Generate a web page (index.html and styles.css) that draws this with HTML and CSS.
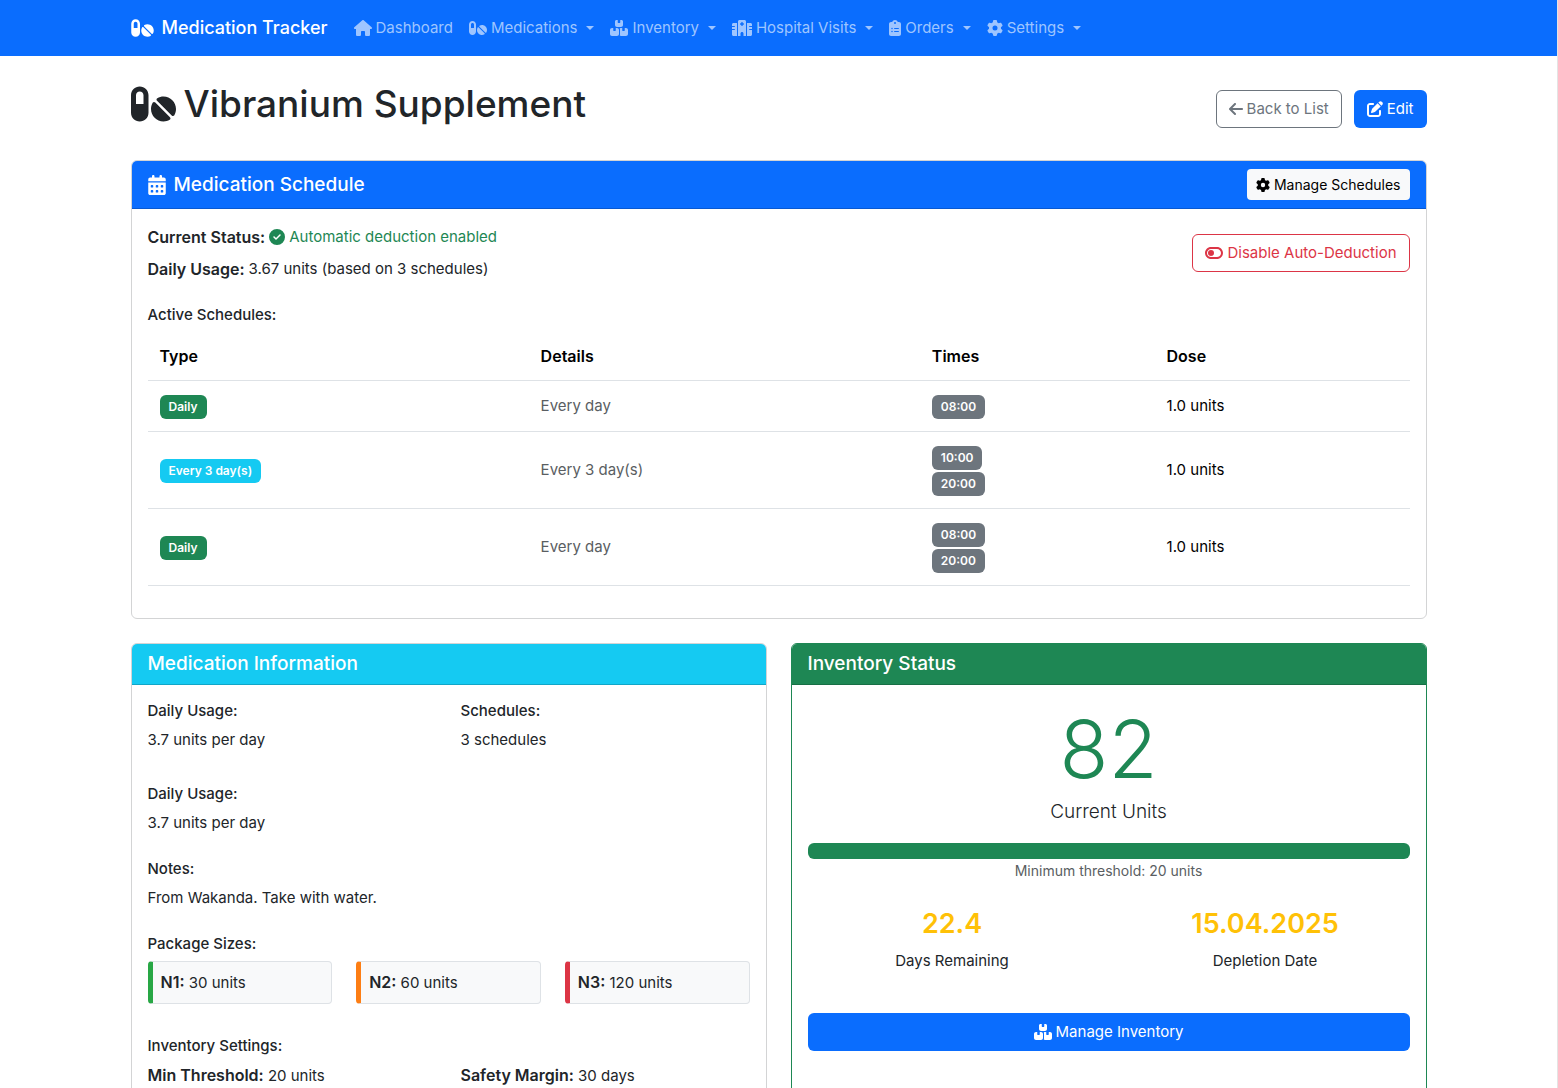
FILE: index.html
```html
<!DOCTYPE html>
<html lang="en">
<head>
<meta charset="utf-8">
<meta name="viewport" content="width=device-width, initial-scale=1">
<title>Vibranium Supplement - Medication Tracker</title>
<link rel="stylesheet" href="styles.css">
</head>
<body>
<svg class="sprite" aria-hidden="true">
  <symbol id="pills" viewBox="0 0 576 512"><path d="M112 96c-26.5 0-48 21.5-48 48V256h96V144c0-26.5-21.5-48-48-48zM0 144C0 82.1 50.1 32 112 32s112 50.1 112 112V368c0 61.900-50.1 112-112 112S0 429.900 0 368V144zM554.900 399.400c-7.100 12.300-23.700 13.100-33.800 3.100L333.500 214.900c-10-10-9.300-26.700 3.100-33.800C360 167.700 387.100 160 416 160c88.400 0 160 71.600 160 160c0 28.900-7.700 56-21.100 79.400zm-59.500 59.500C472 472.300 444.900 480 416 480c-88.400 0-160-71.600-160-160c0-28.900 7.700-56 21.100-79.400c7.100-12.300 23.700-13.100 33.800-3.100L498.500 425.100c10 10 9.300 26.700-3.100 33.800z"/></symbol>
  <symbol id="house" viewBox="0 0 576 512"><path d="M575.8 255.5c0 18-15 32.1-32 32.1h-32l.7 160.2c0 2.700-.2 5.400-.5 8.100V472c0 22.100-17.900 40-40 40H456c-1.100 0-2.200 0-3.300-.1c-1.400 .1-2.800 .1-4.200 .1H416 392c-22.100 0-40-17.900-40-40V448 384c0-17.700-14.300-32-32-32H256c-17.700 0-32 14.300-32 32v64 24c0 22.100-17.900 40-40 40H160 128.100c-1.500 0-3-.1-4.500-.2c-1.200 .1-2.400 .2-3.600 .2H104c-22.100 0-40-17.900-40-40V360c0-.9 0-1.900 .1-2.800V287.600H32c-18 0-32-14-32-32.100c0-9 3-17 10-24L266.400 8c7-7 15-8 22-8s15 2 21 7L564.800 231.500c8 7 12 15 11 24z"/></symbol>
  <symbol id="boxes" viewBox="0 0 576 512"><path d="M248 0H208c-26.5 0-48 21.5-48 48V160c0 35.3 28.7 64 64 64H352c35.3 0 64-28.7 64-64V48c0-26.5-21.5-48-48-48H328V80c0 8.800-7.200 16-16 16H264c-8.800 0-16-7.200-16-16V0zM64 256c-35.3 0-64 28.700-64 64V448c0 35.300 28.700 64 64 64H224c35.300 0 64-28.700 64-64V320c0-35.300-28.700-64-64-64H184v80c0 8.800-7.200 16-16 16H120c-8.800 0-16-7.200-16-16V256H64zM352 512H512c35.300 0 64-28.700 64-64V320c0-35.300-28.700-64-64-64H472v80c0 8.800-7.200 16-16 16H408c-8.800 0-16-7.200-16-16V256H352c-15 0-28.800 5.100-39.700 13.800c4.900 10.400 7.700 22 7.700 34.200V464c0 12.200-2.800 23.800-7.700 34.200C323.200 506.900 337 512 352 512z"/></symbol>
  <symbol id="hospital" viewBox="0 0 640 512"><path d="M192 48c0-26.5 21.5-48 48-48H400c26.5 0 48 21.5 48 48V512H368V432c0-26.500-21.500-48-48-48s-48 21.500-48 48v80H192V48zM48 96H160V512H48c-26.500 0-48-21.500-48-48V320H80c8.800 0 16-7.200 16-16s-7.200-16-16-16H0V224H80c8.800 0 16-7.200 16-16s-7.200-16-16-16H0V144c0-26.500 21.500-48 48-48zm544 0c26.500 0 48 21.500 48 48v48H560c-8.800 0-16 7.200-16 16s7.200 16 16 16h80v64H560c-8.800 0-16 7.200-16 16s7.200 16 16 16h80V464c0 26.500-21.500 48-48 48H480V96H592zM312 64c-8.800 0-16 7.200-16 16v24H272c-8.800 0-16 7.200-16 16v16c0 8.800 7.200 16 16 16h24v24c0 8.800 7.200 16 16 16h16c8.800 0 16-7.200 16-16V152h24c8.800 0 16-7.200 16-16V120c0-8.800-7.200-16-16-16H344V80c0-8.800-7.200-16-16-16H312z"/></symbol>
  <symbol id="clipboard" viewBox="0 0 384 512"><path d="M192 0c-41.8 0-77.4 26.7-90.5 64H64C28.7 64 0 92.7 0 128V448c0 35.3 28.7 64 64 64H320c35.3 0 64-28.7 64-64V128c0-35.3-28.7-64-64-64H282.5C269.4 26.7 233.8 0 192 0zm0 64a32 32 0 1 1 0 64 32 32 0 1 1 0-64zM72 272a24 24 0 1 1 48 0 24 24 0 1 1 -48 0zm104-16H304c8.800 0 16 7.200 16 16s-7.200 16-16 16H176c-8.800 0-16-7.200-16-16s7.200-16 16-16zM72 368a24 24 0 1 1 48 0 24 24 0 1 1 -48 0zm88 0c0-8.800 7.200-16 16-16H304c8.800 0 16 7.200 16 16s-7.200 16-16 16H176c-8.800 0-16-7.200-16-16z"/></symbol>
  <symbol id="gear" viewBox="0 0 512 512"><path d="M495.9 166.6c3.2 8.7 .5 18.4-6.4 24.6l-43.3 39.4c1.1 8.3 1.7 16.8 1.7 25.4s-.6 17.1-1.7 25.4l43.3 39.4c6.9 6.2 9.6 15.9 6.4 24.6c-4.4 11.9-9.7 23.3-15.8 34.3l-4.7 8.1c-6.6 11-14 21.4-22.1 31.2c-5.9 7.2-15.7 9.6-24.5 6.8l-55.7-17.7c-13.4 10.3-28.2 18.9-44 25.4l-12.5 57.1c-2 9.1-9 16.3-18.2 17.8c-13.8 2.3-28 3.5-42.5 3.5s-28.7-1.2-42.5-3.5c-9.2-1.5-16.2-8.7-18.2-17.8l-12.5-57.1c-15.8-6.5-30.6-15.1-44-25.4L83.1 425.9c-8.8 2.8-18.6 .3-24.5-6.8c-8.1-9.8-15.5-20.2-22.1-31.2l-4.7-8.1c-6.1-11-11.4-22.4-15.8-34.3c-3.2-8.7-.5-18.4 6.4-24.6l43.3-39.4C64.6 273.1 64 264.6 64 256s.6-17.1 1.7-25.4L22.4 191.2c-6.9-6.2-9.6-15.9-6.4-24.6c4.4-11.9 9.7-23.3 15.8-34.3l4.7-8.1c6.6-11 14-21.4 22.1-31.2c5.9-7.2 15.7-9.6 24.5-6.8l55.7 17.7c13.4-10.3 28.2-18.9 44-25.4l12.5-57.1c2-9.1 9-16.3 18.2-17.8C227.3 1.2 241.5 0 256 0s28.7 1.2 42.5 3.5c9.2 1.5 16.2 8.7 18.2 17.8l12.5 57.1c15.8 6.5 30.6 15.1 44 25.4l55.7-17.7c8.8-2.8 18.6-.3 24.5 6.8c8.1 9.8 15.5 20.2 22.1 31.2l4.7 8.1c6.1 11 11.4 22.4 15.8 34.3zM256 336a80 80 0 1 0 0-160 80 80 0 1 0 0 160z"/></symbol>
  <symbol id="arrow-left" viewBox="0 0 448 512"><path d="M9.4 233.4c-12.5 12.5-12.5 32.8 0 45.3l160 160c12.5 12.5 32.8 12.5 45.3 0s12.5-32.8 0-45.3L109.200 288 416 288c17.700 0 32-14.300 32-32s-14.300-32-32-32l-306.700 0L214.600 118.600c12.500-12.500 12.500-32.800 0-45.300s-32.800-12.500-45.300 0l-160 160z"/></symbol>
  <symbol id="pen-square" viewBox="0 0 512 512"><path d="M471.6 21.7c-21.9-21.9-57.3-21.9-79.2 0L362.3 51.7l97.9 97.9 30.1-30.1c21.9-21.9 21.9-57.3 0-79.2L471.6 21.7zm-299.2 220c-6.1 6.1-10.8 13.6-13.5 21.9l-29.6 88.8c-2.9 8.6-.6 18.1 5.8 24.6s15.9 8.7 24.6 5.8l88.8-29.6c8.2-2.7 15.7-7.4 21.9-13.5L437.7 172.3 339.7 74.3 172.4 241.7zM96 64C43 64 0 107 0 160V416c0 53 43 96 96 96H352c53 0 96-43 96-96V320c0-17.7-14.3-32-32-32s-32 14.3-32 32v96c0 17.7-14.3 32-32 32H96c-17.7 0-32-14.3-32-32V160c0-17.7 14.3-32 32-32h96c17.7 0 32-14.3 32-32s-14.3-32-32-32H96z"/></symbol>
  <symbol id="calendar" viewBox="0 0 448 512"><path d="M128 0c17.7 0 32 14.3 32 32V64H288V32c0-17.7 14.3-32 32-32s32 14.3 32 32V64h48c26.5 0 48 21.5 48 48v48H0V112C0 85.5 21.5 64 48 64H96V32c0-17.7 14.3-32 32-32zM0 192H448V464c0 26.5-21.5 48-48 48H48c-26.5 0-48-21.5-48-48V192zm64 80v32c0 8.800 7.200 16 16 16h32c8.800 0 16-7.200 16-16V272c0-8.800-7.200-16-16-16H80c-8.800 0-16 7.200-16 16zm128 0v32c0 8.800 7.200 16 16 16h32c8.800 0 16-7.200 16-16V272c0-8.800-7.200-16-16-16H208c-8.800 0-16 7.200-16 16zm144-16c-8.800 0-16 7.200-16 16v32c0 8.800 7.200 16 16 16h32c8.800 0 16-7.200 16-16V272c0-8.800-7.200-16-16-16H336zM64 400v32c0 8.800 7.200 16 16 16h32c8.800 0 16-7.200 16-16V400c0-8.800-7.200-16-16-16H80c-8.800 0-16 7.200-16 16zm144-16c-8.800 0-16 7.200-16 16v32c0 8.800 7.200 16 16 16h32c8.800 0 16-7.200 16-16V400c0-8.800-7.200-16-16-16H208zm112 16v32c0 8.800 7.200 16 16 16h32c8.800 0 16-7.200 16-16V400c0-8.800-7.200-16-16-16H336c-8.800 0-16 7.200-16 16z"/></symbol>
  <symbol id="circle-check" viewBox="0 0 512 512"><path d="M256 512A256 256 0 1 0 256 0a256 256 0 1 0 0 512zM369 209L241 337c-9.400 9.400-24.600 9.400-33.900 0l-64-64c-9.400-9.400-9.400-24.600 0-33.900s24.600-9.400 33.900 0l47 47L335 175c9.400-9.400 24.600-9.400 33.900 0s9.400 24.600 0 33.900z"/></symbol>
  <symbol id="toggle-off" viewBox="0 0 576 512"><path d="M384 128c70.700 0 128 57.300 128 128s-57.300 128-128 128H192c-70.700 0-128-57.300-128-128s57.300-128 128-128H384zM576 256c0-106-86-192-192-192H192C86 64 0 150 0 256S86 448 192 448H384c106 0 192-86 192-192zM192 352a96 96 0 1 0 0-192 96 96 0 1 0 0 192z"/></symbol>
</svg>

<nav class="navbar">
  <div class="container navbar-inner">
    <a class="brand" href="#"><svg class="icon icon-wide"><use href="#pills"/></svg>Medication Tracker</a>
    <ul class="nav-list">
      <li><a class="nav-link" href="#"><svg class="icon icon-wide"><use href="#house"/></svg>Dashboard</a></li>
      <li><a class="nav-link has-menu" href="#"><svg class="icon icon-wide"><use href="#pills"/></svg>Medications</a></li>
      <li><a class="nav-link has-menu" href="#"><svg class="icon icon-wide"><use href="#boxes"/></svg>Inventory</a></li>
      <li><a class="nav-link has-menu" href="#"><svg class="icon icon-wider"><use href="#hospital"/></svg>Hospital Visits</a></li>
      <li><a class="nav-link has-menu" href="#"><svg class="icon icon-slim"><use href="#clipboard"/></svg>Orders</a></li>
      <li><a class="nav-link has-menu" href="#"><svg class="icon"><use href="#gear"/></svg>Settings</a></li>
    </ul>
  </div>
</nav>

<main class="container">
  <header class="page-header">
    <h1 class="page-title"><svg class="icon icon-wide"><use href="#pills"/></svg>Vibranium Supplement</h1>
    <div class="actions">
      <a class="btn btn-outline-secondary" href="#"><svg class="icon icon-narrow"><use href="#arrow-left"/></svg>Back to List</a>
      <a class="btn btn-primary" href="#"><svg class="icon"><use href="#pen-square"/></svg>Edit</a>
    </div>
  </header>

  <section class="card">
    <div class="card-header header-primary">
      <h2 class="card-title"><svg class="icon icon-narrow"><use href="#calendar"/></svg>Medication Schedule</h2>
      <a class="btn btn-light btn-sm" href="#"><svg class="icon"><use href="#gear"/></svg>Manage Schedules</a>
    </div>
    <div class="card-body">
      <div class="status-row">
        <div class="status-lines">
          <p><strong>Current Status:</strong> <span class="enabled"><svg class="icon"><use href="#circle-check"/></svg>Automatic deduction enabled</span></p>
          <p><strong>Daily Usage:</strong> 3.67 units (based on 3 schedules)</p>
        </div>
        <button class="btn btn-outline-danger" type="button"><svg class="icon icon-wide"><use href="#toggle-off"/></svg>Disable Auto-Deduction</button>
      </div>
      <h3 class="label" id="schedules-label">Active Schedules:</h3>
      <table class="table" aria-labelledby="schedules-label">
        <thead>
          <tr><th class="col-type">Type</th><th class="col-details">Details</th><th class="col-times">Times</th><th>Dose</th></tr>
        </thead>
        <tbody>
          <tr>
            <td><div class="badges"><span class="badge badge-success">Daily</span></div></td>
            <td class="muted">Every day</td>
            <td><div class="badges"><span class="badge">08:00</span></div></td>
            <td>1.0 units</td>
          </tr>
          <tr>
            <td><div class="badges"><span class="badge badge-info">Every 3 day(s)</span></div></td>
            <td class="muted">Every 3 day(s)</td>
            <td><div class="badges"><span class="badge">10:00</span><span class="badge">20:00</span></div></td>
            <td>1.0 units</td>
          </tr>
          <tr>
            <td><div class="badges"><span class="badge badge-success">Daily</span></div></td>
            <td class="muted">Every day</td>
            <td><div class="badges"><span class="badge">08:00</span><span class="badge">20:00</span></div></td>
            <td>1.0 units</td>
          </tr>
        </tbody>
      </table>
    </div>
  </section>

  <div class="split cards">
    <section class="card">
      <div class="card-header header-info"><h2 class="card-title">Medication Information</h2></div>
      <div class="card-body info">
        <div class="split usage">
          <div><h3 class="label">Daily Usage:</h3><p>3.7 units per day</p></div>
          <div><h3 class="label">Schedules:</h3><p>3 schedules</p></div>
        </div>
        <div><h3 class="label">Daily Usage:</h3><p>3.7 units per day</p></div>
        <div><h3 class="label">Notes:</h3><p>From Wakanda. Take with water.</p></div>
        <div class="packages">
          <h3 class="label">Package Sizes:</h3>
          <div class="package-grid">
            <div class="package package-n1"><strong>N1:</strong> 30 units</div>
            <div class="package package-n2"><strong>N2:</strong> 60 units</div>
            <div class="package package-n3"><strong>N3:</strong> 120 units</div>
          </div>
        </div>
        <div>
          <h3 class="label">Inventory Settings:</h3>
          <div class="split">
            <p><strong>Min Threshold:</strong> 20 units</p>
            <p><strong>Safety Margin:</strong> 30 days</p>
          </div>
        </div>
      </div>
    </section>

    <section class="card card-success">
      <div class="card-header header-success"><h2 class="card-title">Inventory Status</h2></div>
      <div class="card-body stock">
        <p class="count">82</p>
        <p class="count-label">Current Units</p>
        <div class="progress" role="progressbar" aria-label="Stock level" aria-valuenow="100"><div class="progress-bar" style="width: 100%"></div></div>
        <p class="threshold muted">Minimum threshold: 20 units</p>
        <div class="split forecast">
          <div><p class="figure">22.4</p><p>Days Remaining</p></div>
          <div><p class="figure">15.04.2025</p><p>Depletion Date</p></div>
        </div>
        <a class="btn btn-primary btn-block" href="#"><svg class="icon icon-wide"><use href="#boxes"/></svg>Manage Inventory</a>
      </div>
    </section>
  </div>
</main>
</body>
</html>
```
FILE: styles.css
```css
*, *::before, *::after { box-sizing: border-box; }

:root {
  --primary: #0a6dfe;
  --success: #1e8754;
  --info: #15caf2;
  --danger: #dc3546;
  --secondary: #6d757d;
  --text: #212529;
  --line: #dee2e6;
}

body {
  margin: 0;
  border-right: 1px solid #e4e4e4;
  background: #fff;
  color: var(--text);
  font-family: Inter, "Liberation Sans", sans-serif;
  font-size: 15px;
  line-height: 24px;
}

h1, h2, h3, p, ul { margin: 0; padding: 0; }
a { color: inherit; text-decoration: none; }
strong { font-size: 16px; font-weight: 600; }

.sprite { display: none; }
.icon { width: 16px; height: 16px; margin-right: 4px; flex: none; fill: currentColor; }
.icon-slim { width: 12px; }
.icon-narrow { width: 14px; }
.icon-wide { width: 18px; }
.icon-wider { width: 20px; }

.container { max-width: 1320px; margin: 0 auto; padding: 0 12px; }

/* Navigation */
.navbar { background: var(--primary); color: #fff; }
.navbar-inner { display: flex; align-items: center; min-height: 56px; gap: 18px; }
.brand { display: flex; align-items: center; font-size: 18px; font-weight: 500; }
.brand .icon { width: 23px; height: 20px; margin-right: 8px; }
.nav-list { display: flex; list-style: none; }
.nav-link { display: flex; align-items: center; padding: 8px; color: #9ec5ff; }
.has-menu::after {
  content: "";
  margin-left: 9px;
  border: 4px solid transparent;
  border-top-color: currentColor;
  border-bottom: 0;
}

/* Page heading */
.page-header { display: flex; justify-content: space-between; align-items: flex-end; padding: 24px 0 32px; }
.page-title { display: flex; align-items: center; font-size: 37px; line-height: 48px; font-weight: 500; }
.page-title .icon { width: 45px; height: 40px; margin-right: 8px; }
.actions { display: flex; gap: 12px; }

/* Buttons */
.btn {
  display: inline-flex;
  align-items: center;
  justify-content: center;
  padding: 6px 12px;
  border: 1px solid transparent;
  border-radius: 6px;
  background: none;
  font: inherit;
}
.btn-primary { background: var(--primary); color: #fff; }
.btn-outline-secondary { border-color: var(--secondary); color: var(--secondary); }
.btn-outline-danger { border-color: var(--danger); color: var(--danger); }
.btn-light { background: #f8f9fa; color: #000; }
.btn-sm { padding: 4px 8px; border-radius: 4px; font-size: 14px; line-height: 21px; }
.btn-sm .icon { width: 14px; height: 14px; }
.btn-block { width: 100%; }

/* Cards */
.card { border: 1px solid #d3d4d5; border-radius: 6px; }
.card-success { border-color: var(--success); }
.card-header {
  display: flex;
  align-items: center;
  justify-content: space-between;
  padding: 8px 16px;
  border-bottom: 1px solid rgba(0, 0, 0, 0.176);
  border-radius: 5px 5px 0 0;
  color: #fff;
}
.header-primary { background: var(--primary); }
.header-info { background: var(--info); }
.header-success { background: var(--success); }
.card-title { display: flex; align-items: center; font-size: 19px; line-height: 24px; font-weight: 500; }
.card-title .icon { width: 18px; height: 20px; margin-right: 8px; }
.card-body { padding: 16px; }
.label { margin-bottom: 8px; font-size: 15px; line-height: 19px; font-weight: 500; }
.muted { color: #5a5e62; }

/* Schedule */
.status-row { display: flex; justify-content: space-between; align-items: center; margin-bottom: 24px; }
.status-lines { display: grid; gap: 8px; }
.status-lines p { display: flex; gap: 4px; }
.enabled { display: inline-flex; align-items: center; color: var(--success); }
.table { width: 100%; margin-bottom: 16px; border-collapse: collapse; table-layout: fixed; color: #000; }
.table th, .table td { padding: 12px; border-bottom: 1px solid var(--line); text-align: left; vertical-align: middle; }
.table td.muted { color: #5a5e62; }
.table th { font-size: 16px; font-weight: 600; }
.col-type { width: 30.2%; }
.col-details { width: 31%; }
.col-times { width: 18.6%; }
.badges { display: flex; flex-direction: column; align-items: flex-start; gap: 2px; padding-top: 2px; }
.badge {
  padding: 4px 9px;
  border-radius: 6px;
  background: var(--secondary);
  color: #fff;
  font-size: 12px;
  line-height: 16px;
  font-weight: 600;
}
.badge-success { background: var(--success); }
.badge-info { background: var(--info); }

/* Two-column grids */
.split { display: grid; grid-template-columns: 1fr 1fr; gap: 24px; }
.cards { padding: 24px 0; }

/* Medication information */
.info { display: grid; gap: 24px; align-content: start; }
.usage, .packages { padding-bottom: 8px; }
.package-grid { display: grid; grid-template-columns: repeat(3, 1fr); gap: 24px; }
.package { padding: 8px; border: 1px solid var(--line); border-left-width: 5px; border-radius: 4px; background: #f8f9fa; }
.package-n1 { border-left-color: #28a745; }
.package-n2 { border-left-color: #fd7e14; }
.package-n3 { border-left-color: #dc3545; }

/* Inventory status */
.stock { text-align: center; }
.count { color: var(--success); font-size: 80px; line-height: 96px; font-weight: 350; }
.count-label { margin-bottom: 16px; font-size: 19px; line-height: 30px; font-weight: 300; }
.progress { height: 16px; border-radius: 6px; background: #e9ecef; overflow: hidden; }
.progress-bar { height: 100%; background: var(--success); }
.threshold { margin-bottom: 24px; font-size: 14px; }
.forecast { margin-bottom: 40px; }
.figure { margin-bottom: 8px; color: #ffc107; font-size: 27px; line-height: 34px; font-weight: 600; }
```
